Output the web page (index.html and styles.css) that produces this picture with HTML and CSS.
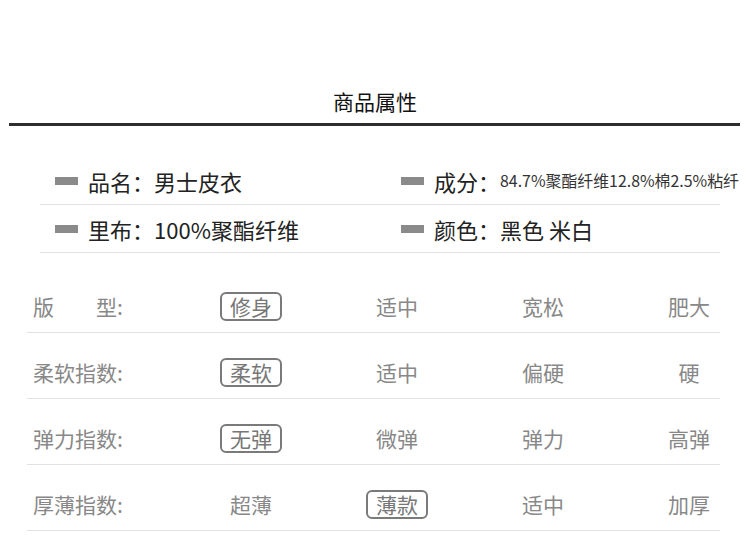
FILE: index.html
```html
<!DOCTYPE html>
<html lang="zh">
<head>
<meta charset="utf-8">
<link rel="stylesheet" href="styles.css">
</head>
<body>
<div class="page">
  <h1 class="title">商品属性</h1>
  <div class="rule"></div>

  <div class="info">
    <div class="info-row">
      <div class="cell"><span class="bar"></span><span class="txt">品名：男士皮衣</span></div>
      <div class="cell"><span class="bar"></span><span class="txt">成分：</span><span class="small">84.7%聚酯纤维12.8%棉2.5%粘纤</span></div>
    </div>
    <div class="info-row">
      <div class="cell"><span class="bar"></span><span class="txt">里布：100%聚酯纤维</span></div>
      <div class="cell"><span class="bar"></span><span class="txt">颜色：黑色 米白</span></div>
    </div>
  </div>

  <div class="table">
    <div class="trow">
      <div class="label">版　　型:</div>
      <div class="val"><span class="sel">修身</span></div>
      <div class="val">适中</div>
      <div class="val">宽松</div>
      <div class="val">肥大</div>
    </div>
    <div class="trow">
      <div class="label">柔软指数:</div>
      <div class="val"><span class="sel">柔软</span></div>
      <div class="val">适中</div>
      <div class="val">偏硬</div>
      <div class="val">硬</div>
    </div>
    <div class="trow">
      <div class="label">弹力指数:</div>
      <div class="val"><span class="sel">无弹</span></div>
      <div class="val">微弹</div>
      <div class="val">弹力</div>
      <div class="val">高弹</div>
    </div>
    <div class="trow">
      <div class="label">厚薄指数:</div>
      <div class="val">超薄</div>
      <div class="val"><span class="sel">薄款</span></div>
      <div class="val">适中</div>
      <div class="val">加厚</div>
    </div>
  </div>
</div>
</body>
</html>
```

FILE: styles.css
```css
html, body {
  margin: 0;
  padding: 0;
  background: #fff;
}
body {
  width: 750px;
  height: 560px;
  overflow: hidden;
  font-family: "Noto Sans CJK SC", "Noto Sans", sans-serif;
}
.page {
  padding-top: 86px;
}
.title {
  margin: 0;
  font-size: 21px;
  font-weight: 400;
  line-height: 30px;
  text-align: center;
  color: #111;
}
.rule {
  margin: 7px 10px 0 9px;
  height: 3px;
  background: #2e2e2e;
}

.info {
  margin: 31px 30px 0 40px;
}
.info-row {
  display: grid;
  grid-template-columns: 346px 1fr;
  border-bottom: 1px solid #e2e2e2;
  padding: 12px 0 11px;
}
.cell {
  display: flex;
  align-items: center;
  padding-left: 15px;
  height: 24px;
  white-space: nowrap;
}
.bar {
  width: 23px;
  height: 8px;
  background: #8a8a8a;
  margin-right: 10px;
  flex: none;
}
.txt {
  font-size: 22px;
  line-height: 24px;
  color: #222;
}
.small {
  font-size: 15.9px;
  line-height: 24px;
  color: #333;
}

.table {
  margin: 13px 30px 0 27px;
}
.trow {
  display: grid;
  grid-template-columns: 1fr repeat(4, 62px);
  column-gap: 84px;
  align-items: end;
  box-sizing: content-box;
  height: 54px;
  padding-bottom: 12px;
  border-bottom: 1px solid #e2e2e2;
}
.trow + .trow {
  height: 53px;
}
.label {
  padding-left: 6px;
  font-size: 21px;
  line-height: 28px;
  color: #888;
  white-space: nowrap;
}
.val {
  display: flex;
  justify-content: center;
  font-size: 21px;
  line-height: 28px;
  color: #888;
  white-space: nowrap;
}
.sel {
  display: flex;
  align-items: center;
  justify-content: center;
  box-sizing: border-box;
  width: 62px;
  height: 29px;
  margin-bottom: -1px;
  padding-bottom: 2px;
  border: 2px solid #7a7a7a;
  border-radius: 6px;
  color: #777;
}
```
